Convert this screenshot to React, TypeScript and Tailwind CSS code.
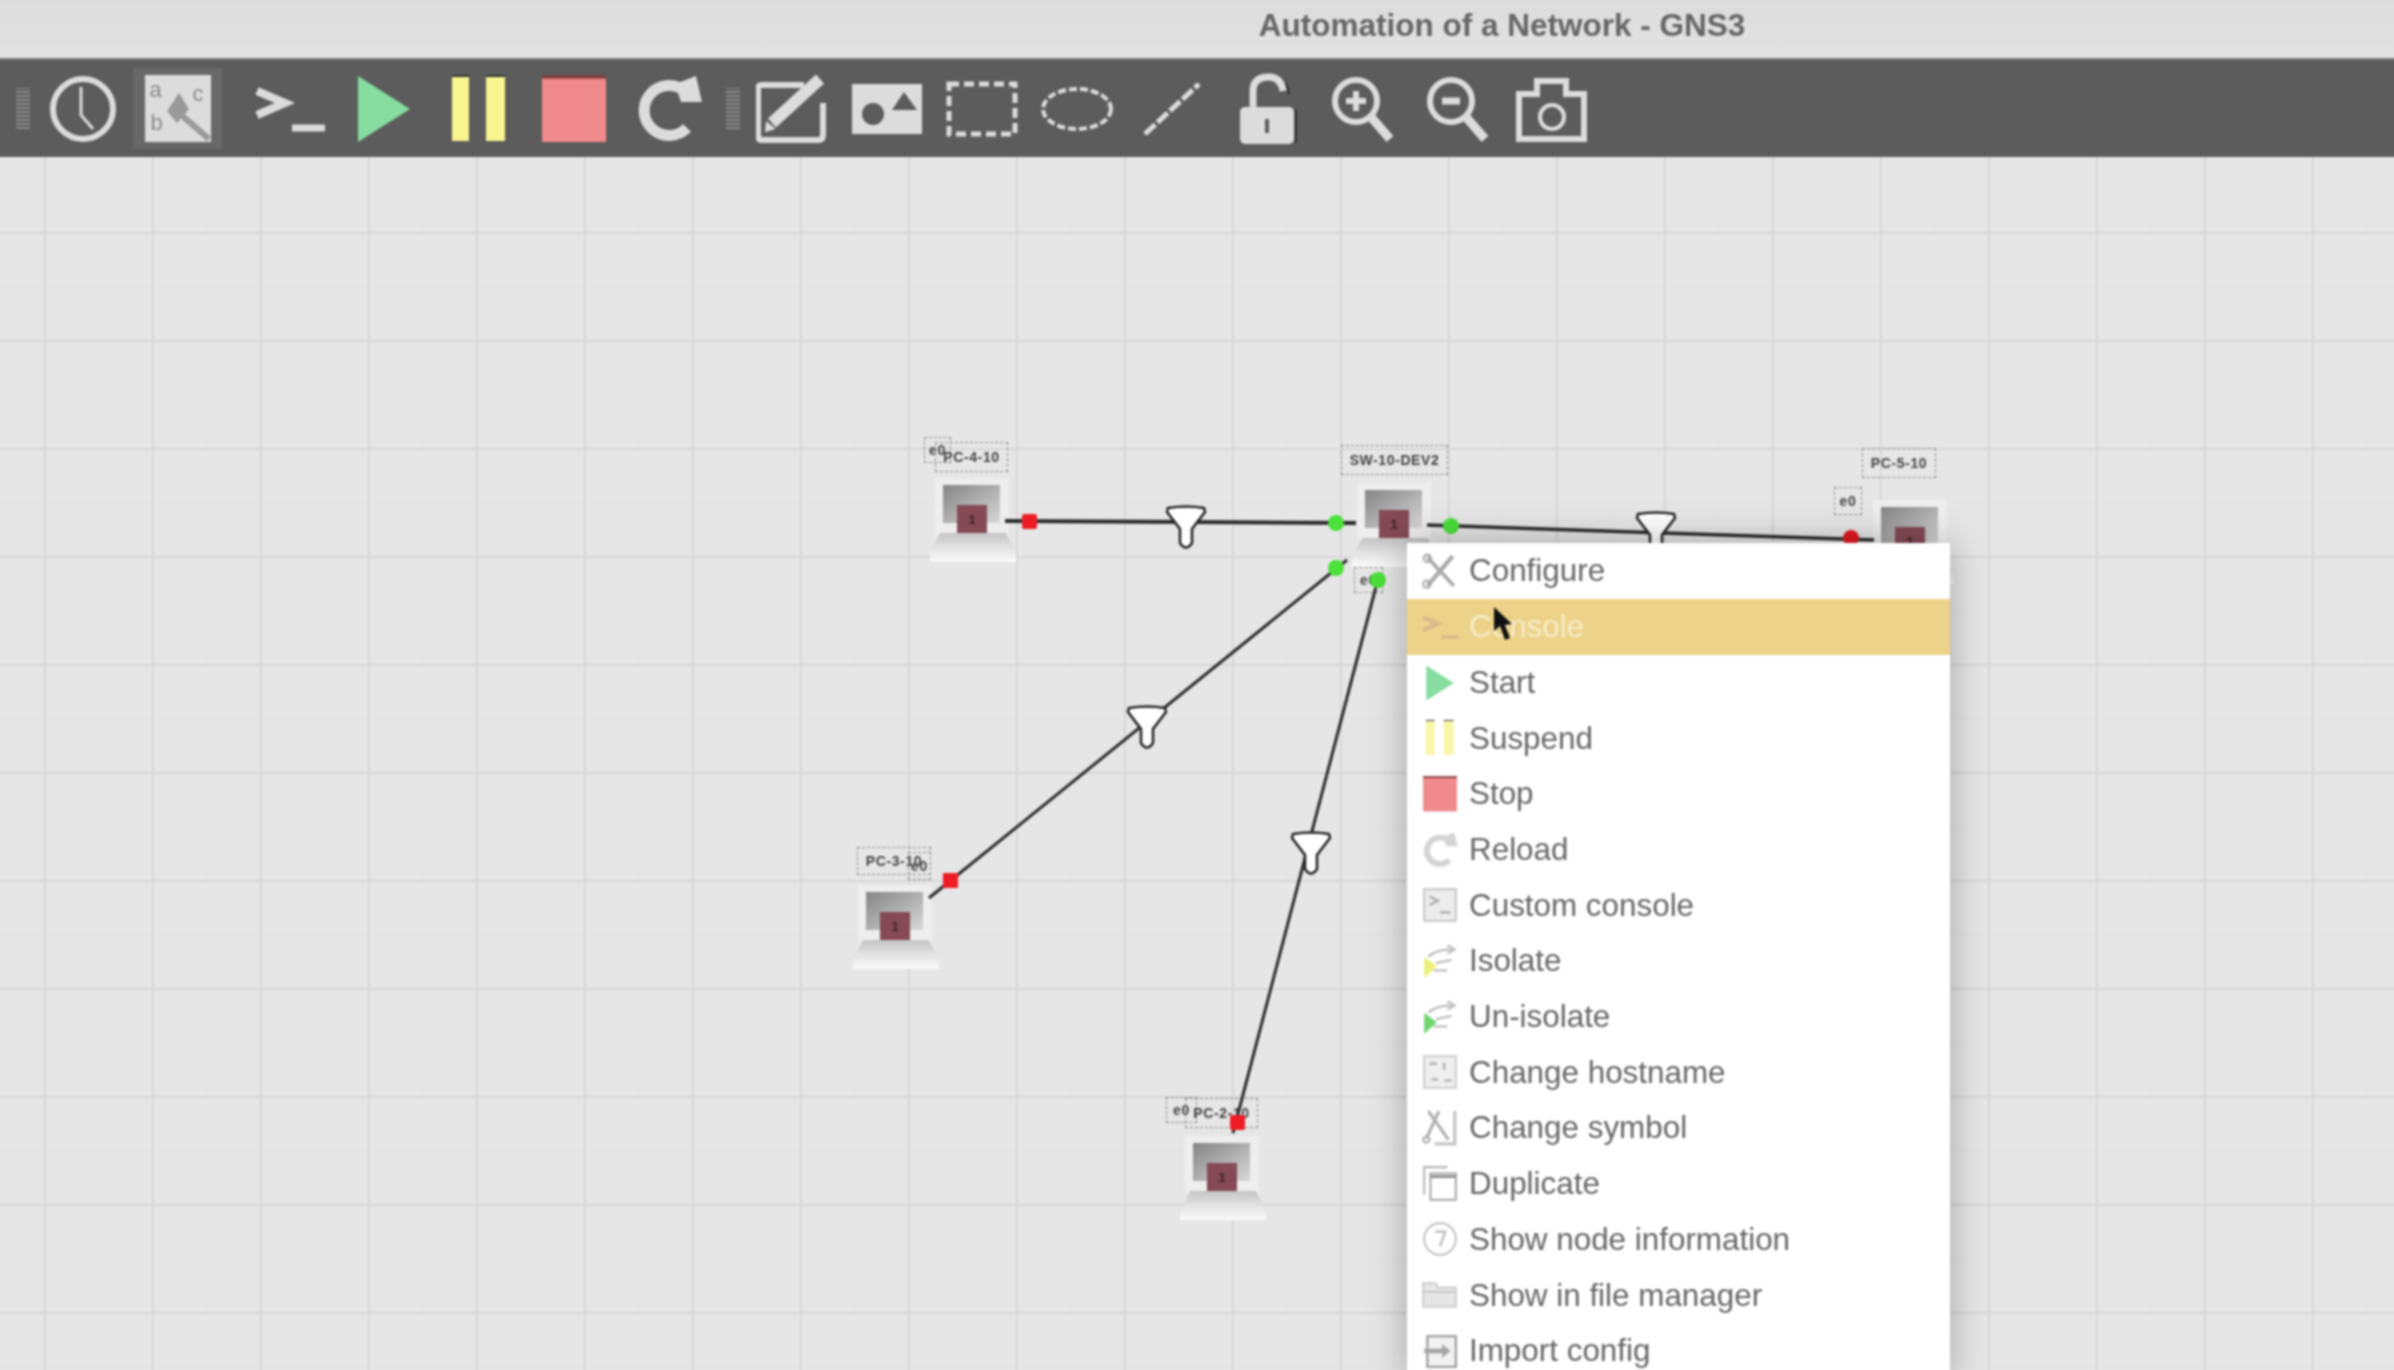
import React from 'react';

const font = "font-['Liberation_Sans',Arial,sans-serif]";

// every toolbar glyph is drawn around (0,0) in a 72 unit box
const Glyph = ({ className = 'w-[72px] h-[72px]', children }: { className?: string; children: React.ReactNode }) => (
  <svg viewBox="-36 -36 72 72" className={className} fill="none" stroke="currentColor">
    {children}
  </svg>
);

type IconProps = { className?: string };

const ClockIcon = ({ className }: IconProps) => (
  <Glyph className={className}>
    <circle r="30" strokeWidth="6" />
    <path d="M-2,-22 L-2,6 L10,20" strokeWidth="3" />
  </Glyph>
);

const TermIcon = ({ className }: IconProps) => (
  <Glyph className={className}>
    <path d="M-32,-18 L-4,-6 L-32,6" strokeWidth="8" />
    <path d="M3,19 L36,19" strokeWidth="7" />
  </Glyph>
);

const PlayIcon = ({ className }: IconProps) => (
  <Glyph className={className}>
    <polygon points="-26,-33 26,0 -26,33" fill="currentColor" stroke="none" />
  </Glyph>
);

const PauseIcon = ({ className }: IconProps) => (
  <Glyph className={className}>
    <rect x="-27" y="-32" width="17" height="64" fill="currentColor" stroke="none" />
    <rect x="7" y="-32" width="19" height="64" fill="currentColor" stroke="none" />
    <path d="M-27,-33 L-10,-33 M7,-33 L26,-33" stroke="#333" strokeWidth="2" />
  </Glyph>
);

const StopIcon = ({ className }: IconProps) => (
  <Glyph className={className}>
    <rect x="-32" y="-33" width="64" height="66" fill="currentColor" stroke="none" />
    <path d="M-32,-32 L32,-32" stroke="#7d3436" strokeWidth="3" />
  </Glyph>
);

const ReloadIcon = ({ className }: IconProps) => (
  <Glyph className={className}>
    <path d="M17,-17 A25,25 0 1 0 18,19" strokeWidth="11" />
    <polygon points="6,-25 27,-33 33,-7 12,-7" fill="currentColor" stroke="none" />
  </Glyph>
);

const NoteIcon = ({ className }: IconProps) => (
  <Glyph className={className}>
    <path d="M12,-24 L-30,-24 Q-34,-24 -34,-20 L-34,26 Q-34,31 -30,31 L26,31 Q31,31 31,26 L31,-6" strokeWidth="6" />
    <path d="M-20,14 L28,-30" strokeWidth="12" />
    <polygon points="-27,23 -26,12 -16,20" fill="currentColor" stroke="none" />
    <path d="M-19,23 L32,-22" stroke="#5c5c5c" strokeWidth="2" />
  </Glyph>
);

const ImageIcon = ({ className }: IconProps) => (
  <Glyph className={className}>
    <rect x="-35" y="-25" width="70" height="50" fill="currentColor" stroke="none" />
    <circle cx="-14" cy="5" r="11" fill="#5c5c5c" stroke="none" />
    <polygon points="5,1 30,1 17,-17" fill="#5c5c5c" stroke="none" />
  </Glyph>
);

const RectIcon = ({ className }: IconProps) => (
  <Glyph className={className}>
    <rect x="-33" y="-25" width="66" height="50" strokeWidth="5" strokeDasharray="10 5" />
  </Glyph>
);

const EllipseIcon = ({ className }: IconProps) => (
  <Glyph className={className}>
    <ellipse rx="34" ry="20" strokeWidth="4" strokeDasharray="8 3" />
  </Glyph>
);

const LineIcon = ({ className }: IconProps) => (
  <Glyph className={className}>
    <path d="M-27,25 L27,-25" strokeWidth="5" strokeDasharray="14 3" />
  </Glyph>
);

const LockIcon = ({ className }: IconProps) => (
  <Glyph className={className}>
    <path d="M-14,2 L-14,-18 Q-14,-32 2,-32 Q14,-32 16,-18" strokeWidth="7" />
    <rect x="-27" y="-2" width="54" height="37" rx="5" fill="currentColor" stroke="none" />
    <path d="M0,10 L0,24" stroke="#5c5c5c" strokeWidth="4" />
    <path d="M19,-26 Q22,-20 22,-14 M29,0 L29,34" stroke="#333" strokeWidth="2" />
  </Glyph>
);

const ZoomInIcon = ({ className }: IconProps) => (
  <Glyph className={className}>
    <circle cx="-6" cy="-8" r="21" strokeWidth="6" />
    <path d="M9,8 L28,30" strokeWidth="9" />
    <path d="M-16,-8 L4,-8 M-6,-18 L-6,2" strokeWidth="6" />
  </Glyph>
);

const ZoomOutIcon = ({ className }: IconProps) => (
  <Glyph className={className}>
    <circle cx="-6" cy="-8" r="21" strokeWidth="6" />
    <path d="M9,8 L28,30" strokeWidth="9" />
    <path d="M-15,-8 L3,-8" strokeWidth="7" />
  </Glyph>
);

const CameraIcon = ({ className }: IconProps) => (
  <Glyph className={className}>
    <path d="M-33,-15 L-15,-15 L-15,-28 L14,-28 L14,-15 L32,-15 L32,30 L-33,30 Z" strokeWidth="6" />
    <circle cx="0" cy="8" r="12" strokeWidth="4" />
  </Glyph>
);

const ConfigureIcon = ({ className }: IconProps) => (
  <Glyph className={className}>
    <path d="M-24,-26 L26,28" strokeWidth="7" />
    <path d="M24,-28 L-24,28" strokeWidth="8" />
    <circle cx="-24" cy="-24" r="7" strokeWidth="4" />
    <circle cx="-25" cy="25" r="7" strokeWidth="4" />
  </Glyph>
);

const ConsoleBoxIcon = ({ className }: IconProps) => (
  <Glyph className={className}>
    <rect x="-30" y="-30" width="60" height="60" fill="#ececec" stroke="#c8c8c8" strokeWidth="4" />
    <path d="M-20,-16 L-4,-8 L-20,0 M0,14 L20,14" stroke="#aaa" strokeWidth="4" />
  </Glyph>
);

const IsolateIcon = ({ className, dot }: IconProps & { dot: string }) => (
  <Glyph className={className}>
    <path d="M-22,-8 Q-8,-22 22,-22 M14,-30 L28,-22 L14,-14 M-8,4 L22,-2" stroke="#bbb" strokeWidth="4" />
    <path d="M-12,18 L14,18" stroke="#bbb" strokeWidth="4" />
    <polygon points="-30,-8 -6,10 -30,32" fill={dot} stroke="none" />
  </Glyph>
);

const HostnameIcon = ({ className }: IconProps) => (
  <Glyph className={className}>
    <rect x="-30" y="-30" width="60" height="60" fill="#efefef" stroke="#cfcfcf" strokeWidth="4" />
    <path d="M-20,-16 L-6,-16 M8,-18 L8,-4 M-16,14 L-4,14 M8,16 L22,16" stroke="#b5b5b5" strokeWidth="5" />
  </Glyph>
);

const SymbolIcon = ({ className }: IconProps) => (
  <Glyph className={className}>
    <path d="M-22,-32 L16,22 M-2,-32 L-26,20" stroke="#b0b0b0" strokeWidth="6" />
    <path d="M28,-32 L28,30 L-10,30" stroke="#c4c4c4" strokeWidth="6" />
    <circle cx="-26" cy="22" r="6" stroke="#b0b0b0" strokeWidth="4" />
  </Glyph>
);

const DuplicateIcon = ({ className }: IconProps) => (
  <Glyph className={className}>
    <path d="M-30,20 L-30,-32 L14,-32" stroke="#b5b5b5" strokeWidth="4" />
    <rect x="-18" y="-20" width="48" height="50" fill="#fff" stroke="#aaa" strokeWidth="4" />
    <path d="M-18,-14 L30,-14" stroke="#888" strokeWidth="5" />
  </Glyph>
);

const InfoIcon = ({ className }: IconProps) => (
  <Glyph className={className}>
    <circle r="30" stroke="#c4c4c4" strokeWidth="4" />
    <path d="M-9,-14 L10,-14 L0,14" stroke="#c4c4c4" strokeWidth="5" />
  </Glyph>
);

const FolderIcon = ({ className }: IconProps) => (
  <Glyph className={className}>
    <path d="M-32,-22 L-8,-22 L-4,-14 L30,-14 L30,22 L-32,22 Z" fill="#e6e6e6" stroke="#cfcfcf" strokeWidth="4" />
    <path d="M-32,-6 L30,-6" stroke="#c4c4c4" strokeWidth="3" />
  </Glyph>
);

const ImportIcon = ({ className }: IconProps) => (
  <Glyph className={className}>
    <rect x="-24" y="-28" width="54" height="58" fill="#f2f2f2" stroke="#999" strokeWidth="4" />
    <path d="M-30,0 L8,0" stroke="#a5a5a5" strokeWidth="9" />
    <polygon points="4,-13 20,0 4,13" fill="#a5a5a5" stroke="none" />
  </Glyph>
);

const Handle = () => (
  <div className="h-[41px] w-[14px] shrink-0 bg-[repeating-linear-gradient(0deg,#8a8a8a_0px,#8a8a8a_2px,#5c5c5c_2px,#5c5c5c_4px)]" />
);

const ToolButton = ({ className = '', children }: { className?: string; children: React.ReactNode }) => (
  <div className={`flex h-[99px] w-[95px] shrink-0 items-center justify-center ${className}`}>{children}</div>
);

const AnnotateButton = () => (
  <div className="mx-[3px] flex h-[81px] w-[89px] items-center justify-center bg-[#686868]">
    <div className={`relative h-[67px] w-[66px] bg-[#dcdcdc] text-[22px] leading-none text-[#8a8a8a] ${font}`}>
      <span className="absolute left-[5px] top-[4px]">a</span>
      <span className="absolute right-[7px] top-[8px]">c</span>
      <span className="absolute bottom-[8px] left-[6px]">b</span>
      <svg viewBox="0 0 66 67" className="absolute inset-0 h-full w-full" fill="none">
        <path d="M34,38 L64,64" stroke="#999" strokeWidth="6" />
        <path d="M22,36 L34,18 L44,34 L32,48 Z" fill="#999" />
      </svg>
    </div>
  </div>
);

const Toolbar = () => (
  <div className="flex h-[99px] shrink-0 items-center border-t-2 border-[#7b7b7b] bg-[#5c5c5c] pl-5 text-[#dcdcdc]">
    <Handle />
    <div className="w-[5px] shrink-0" />
    <ToolButton><ClockIcon /></ToolButton>
    <ToolButton className="mr-4"><AnnotateButton /></ToolButton>
    <ToolButton><TermIcon /></ToolButton>
    <ToolButton className="text-[#86dd9f]"><PlayIcon /></ToolButton>
    <ToolButton className="text-[#f8f58f]"><PauseIcon /></ToolButton>
    <ToolButton className="text-[#f08a8c]"><StopIcon /></ToolButton>
    <ToolButton><ReloadIcon /></ToolButton>
    <div className="w-[10px] shrink-0" />
    <Handle />
    <div className="w-[4px] shrink-0" />
    <ToolButton><NoteIcon /></ToolButton>
    <ToolButton><ImageIcon /></ToolButton>
    <ToolButton><RectIcon /></ToolButton>
    <ToolButton><EllipseIcon /></ToolButton>
    <ToolButton><LineIcon /></ToolButton>
    <ToolButton><LockIcon /></ToolButton>
    <ToolButton><ZoomInIcon /></ToolButton>
    <ToolButton><ZoomOutIcon /></ToolButton>
    <ToolButton><CameraIcon /></ToolButton>
  </div>
);

const Node = ({ className }: { className: string }) => (
  <div className={`absolute h-[78px] w-[86px] ${className}`}>
    <div className="absolute -top-[7px] left-[5px] h-[56px] w-[74px] bg-[#eeeeee]" />
    <div className="absolute left-[13px] top-0 h-[38px] w-[57px] bg-gradient-to-br from-[#858585] via-[#aeaeae] to-[#d8d8d8]" />
    <div className={`absolute left-[27px] top-[20px] flex h-[30px] w-[30px] items-center justify-center bg-[#854a55] text-[13px] font-bold text-[#3d2228] ${font}`}>
      1
    </div>
    <div className="absolute left-0 top-[48px] h-[29px] w-[86px] bg-gradient-to-b from-[#c4c4c4] via-[#e2e2e2] to-[#fbfbfb] [clip-path:polygon(12%_0,88%_0,100%_70%,100%_100%,0_100%,0_70%)]" />
  </div>
);

const Label = ({ className, children }: { className: string; children: React.ReactNode }) => (
  <div className={`absolute flex items-center justify-center border border-dashed border-[#8f8f8f] text-[14px] font-bold tracking-[0.6px] text-[#444] ${font} ${className}`}>
    {children}
  </div>
);

const Funnel = ({ x, y }: { x: number; y: number }) => (
  <path
    transform={`translate(${x} ${y})`}
    d="M-18,-19 Q0,-22 18,-19 L19,-15 L6,2 L6,16 Q0,25 -6,16 L-6,2 L-19,-15 Z"
    fill="#fff"
    stroke="#222"
    strokeWidth="2.5"
  />
);

const Links = () => (
  <svg viewBox="0 157 2398 1217" className="absolute inset-0 h-full w-full" fill="none">
    <g stroke="#2b2b2b" strokeWidth="3">
      <path d="M1005,521 L1356,523" strokeWidth="4" />
      <path d="M1427,525 L1874,540" strokeWidth="3.5" />
      <path d="M1347,560 L929,898" />
      <path d="M1377,583 L1233,1133" />
    </g>
    <Funnel x={1186} y={527} />
    <Funnel x={1656} y={533} />
    <Funnel x={1147} y={727} />
    <Funnel x={1311} y={853} />
    <rect x="1022" y="514" width="15" height="15" rx="2" fill="#ee1c25" />
    <rect x="943" y="873" width="15" height="15" rx="1" fill="#ee1c25" />
    <rect x="1230" y="1115" width="15" height="15" rx="2" fill="#ee1c25" />
    <circle cx="1851" cy="538" r="8" fill="#e4191f" />
    <circle cx="1336" cy="523" r="8" fill="#4be03a" />
    <circle cx="1451" cy="526" r="8" fill="#4be03a" />
    <circle cx="1336" cy="568" r="8" fill="#4be03a" />
    <circle cx="1378" cy="580" r="8" fill="#4be03a" />
  </svg>
);

type MenuRow = { label: string; icon: React.ReactNode };

const iconSize = 'w-[38px] h-[38px]';

const rows: MenuRow[] = [
  { label: 'Configure', icon: <span className="text-[#aaa]"><ConfigureIcon className={iconSize} /></span> },
  { label: 'Start', icon: <span className="text-[#86dd9f]"><PlayIcon className={iconSize} /></span> },
  { label: 'Suspend', icon: <span className="text-[#f8f7a8]"><PauseIcon className={iconSize} /></span> },
  { label: 'Stop', icon: <span className="text-[#f08a8c]"><StopIcon className={iconSize} /></span> },
  { label: 'Reload', icon: <span className="text-[#d4d4d4]"><ReloadIcon className={iconSize} /></span> },
  { label: 'Custom console', icon: <ConsoleBoxIcon className={iconSize} /> },
  { label: 'Isolate', icon: <IsolateIcon className={iconSize} dot="#eef07a" /> },
  { label: 'Un-isolate', icon: <IsolateIcon className={iconSize} dot="#6fd66f" /> },
  { label: 'Change hostname', icon: <HostnameIcon className={iconSize} /> },
  { label: 'Change symbol', icon: <SymbolIcon className={iconSize} /> },
  { label: 'Duplicate', icon: <DuplicateIcon className={iconSize} /> },
  { label: 'Show node information', icon: <InfoIcon className={iconSize} /> },
  { label: 'Show in file manager', icon: <FolderIcon className={iconSize} /> },
  { label: 'Import config', icon: <ImportIcon className={iconSize} /> },
];

const Row = ({ row }: { row: MenuRow }) => (
  <div className="flex h-[55.7px] items-center gap-[10px] pl-[14px]">
    {row.icon}
    <span>{row.label}</span>
  </div>
);

const ContextMenu = () => (
  <div className={`absolute left-[1407px] top-[386px] w-[543px] bg-white text-[31.4px] text-[#666] shadow-[0_0_36px_rgba(0,0,0,0.3)] ${font}`}>
    <Row row={rows[0]} />
    <div className="flex h-[56px] items-center gap-[10px] bg-[#edd389] pl-[14px] text-[#f7ecca]">
      <span className="text-[#dcb98a]"><TermIcon className={iconSize} /></span>
      <span>Console</span>
    </div>
    {rows.slice(1).map((row) => (
      <Row key={row.label} row={row} />
    ))}
  </div>
);

const Cursor = () => (
  <svg viewBox="0 0 20 34" className="absolute left-[1493px] top-[450px] h-[34px] w-[20px]">
    <path d="M1,0 L1,24 L7,19 L12,33 L17,31 L12,18 L19,17 Z" fill="#111" />
  </svg>
);

export default function App() {
  return (
    <div className="h-[1370px] w-[2394px] overflow-hidden bg-[#e6e6e6]">
      {/* 4px bleed on every edge so the video blur does not fade the page border */}
      <div className={`-ml-[4px] -mt-[4px] flex h-[1378px] w-[2402px] flex-col blur-[0.9px] ${font}`}>
        <div className="flex h-[62px] shrink-0 items-center justify-center bg-gradient-to-b from-[#dcdcdc] to-[#e2e2e2] pb-[2px] pl-[610px] text-[31.5px] font-bold text-[#666]">
          Automation of a Network - GNS3
        </div>
        <Toolbar />
        <main className="relative flex-1 overflow-hidden bg-[#e6e6e6] bg-[linear-gradient(to_right,#d6d6d6_2px,transparent_2px),linear-gradient(to_bottom,#d6d6d6_2px,transparent_2px),linear-gradient(to_right,#e2e2e2_1px,transparent_1px),linear-gradient(to_bottom,#e2e2e2_1px,transparent_1px)] [background-size:108px_108px,108px_108px,54px_54px,54px_54px] [background-position:48px_0,0_75px,48px_0,0_75px]">
          <div className="relative ml-[4px] h-full">
            <Node className="left-[930px] top-[328px]" />
            <Node className="left-[1352px] top-[333px]" />
            <Node className="left-[1868px] top-[350px]" />
            <Node className="left-[853px] top-[735px]" />
            <Node className="left-[1180px] top-[986px]" />

            <Label className="left-[924px] top-[280px] h-[26px] w-[27px]">e0</Label>
            <Label className="left-[935px] top-[285px] h-[30px] w-[73px]">PC-4-10</Label>
            <Label className="left-[1341px] top-[288px] h-[30px] w-[107px]">SW-10-DEV2</Label>
            <Label className="left-[1862px] top-[291px] h-[30px] w-[74px]">PC-5-10</Label>
            <Label className="left-[1834px] top-[330px] h-[28px] w-[28px]">e0</Label>
            <Label className="left-[1354px] top-[410px] h-[26px] w-[29px]">e0</Label>
            <Label className="left-[857px] top-[690px] h-[28px] w-[74px]">PC-3-10</Label>
            <Label className="left-[908px] top-[695px] h-[28px] w-[23px]">e0</Label>
            <Label className="left-[1166px] top-[940px] h-[26px] w-[31px]">e0</Label>
            <Label className="left-[1185px] top-[941px] h-[30px] w-[73px]">PC-2-10</Label>

            <Links />
            <ContextMenu />
            <Cursor />
          </div>
        </main>
      </div>
    </div>
  );
}
